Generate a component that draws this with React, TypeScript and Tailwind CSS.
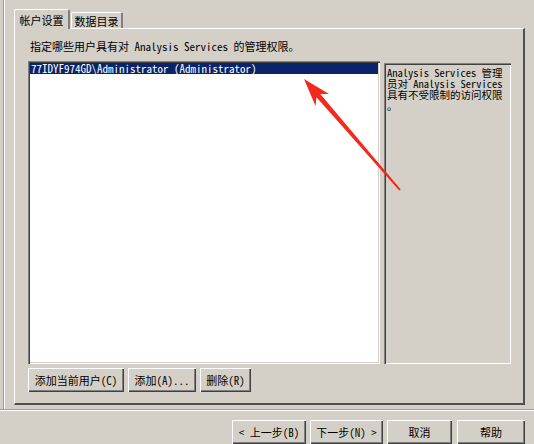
const raised =
  "shadow-[inset_1px_1px_0_#ffffff,inset_-1px_-1px_0_#404040,inset_-2px_-2px_0_#808080]";
const sunken =
  "shadow-[inset_1px_1px_0_#808080,inset_2px_2px_0_#404040,inset_-1px_-1px_0_#ffffff,inset_-2px_-2px_0_#d4d0c8]";

function Btn({ label, w }: { label: string; w: string }) {
  return (
    <div className={`${w} h-[24px] flex items-center justify-center bg-[#d4d0c8] ${raised} text-[#000]`}>
      {label}
    </div>
  );
}

export default function App() {
  return (
    <div
      className="relative w-[534px] h-[444px] overflow-hidden bg-[#d4d0c8] flex flex-col text-[11px] leading-[11px] text-black"
      style={{ fontFamily: '"Noto Sans Mono CJK SC", "Noto Sans CJK SC", "Liberation Mono", monospace' }}
    >
      {/* upper area */}
      <div className="h-[416px] flex">
        <div className="ml-[3px] w-[2px] border-l border-[#a09d97] border-r border-r-white" />
        <div className="flex-1 pl-[9px] pt-[9px] pr-[9px]">
          {/* tabs */}
          <div className="flex items-end h-[19px]">
            <div className="relative z-10 w-[56px] h-[20px] -mb-[1px] bg-[#d4d0c8] border-l border-t border-white border-r-2 border-r-[#808080] rounded-t-[2px] flex items-center justify-center pt-[1px]">
              帐户设置
            </div>
            <div className="ml-[1px] w-[52px] h-[16px] bg-[#d4d0c8] border-l border-t border-white border-r-2 border-r-[#808080] rounded-t-[2px] flex items-center justify-center pt-[1px]">
              数据目录
            </div>
          </div>
          {/* panel */}
          <div className="w-[511px] h-[377px] border-l border-t border-white border-r-2 border-b-2 border-r-[#505050] border-b-[#505050] pl-[13px] pt-[12px] flex flex-col">
            <div className="h-[11px] pl-[2px]">指定哪些用户具有对 Analysis Services 的管理权限。</div>
            <div className="mt-[9px] flex gap-[4px]">
              <div className={`w-[352px] h-[303px] bg-white ${sunken} p-[2px]`}>
                <div className="h-[11px] bg-[#0a246a] text-white pl-[1px] flex items-center">
                  77IDYF974GD\Administrator (Administrator)
                </div>
              </div>
              <div className={`mt-[2px] w-[127px] h-[301px] ${sunken} pl-[3px] pt-[4px] leading-[11px] text-[10.5px]`}>
                <div>Analysis Services 管理</div>
                <div>员对 Analysis Services</div>
                <div>具有不受限制的访问权限</div>
                <div>。</div>
              </div>
            </div>
            <div className="mt-[4px] flex gap-[4px]">
              <Btn label="添加当前用户(C)" w="w-[96px]" />
              <Btn label="添加(A)..." w="w-[68px]" />
              <Btn label="删除(R)" w="w-[51px]" />
            </div>
          </div>
        </div>
      </div>
      {/* separator */}
      <div className="h-[2px] border-t border-[#a09d97] border-b border-b-white" />
      {/* bottom buttons */}
      <div className="flex-1 pt-[9px] pl-[232px] flex items-start">
        <Btn label="< 上一步(B)" w="w-[74px]" />
        <div className="w-[4px]" />
        <Btn label="下一步(N) >" w="w-[73px]" />
        <div className="w-[4px]" />
        <Btn label="取消" w="w-[65px]" />
        <div className="w-[5px]" />
        <Btn label="帮助" w="w-[68px]" />
      </div>

      {/* red annotation arrow */}
      <svg className="absolute inset-0 pointer-events-none" width="534" height="444" viewBox="0 0 534 444">
        <polygon
          points="304,79 329,94 320.3,94 400.8,189.6 399.2,190.6 316.5,97.2 315.5,106"
          fill="#f2291c"
        />
      </svg>
    </div>
  );
}
